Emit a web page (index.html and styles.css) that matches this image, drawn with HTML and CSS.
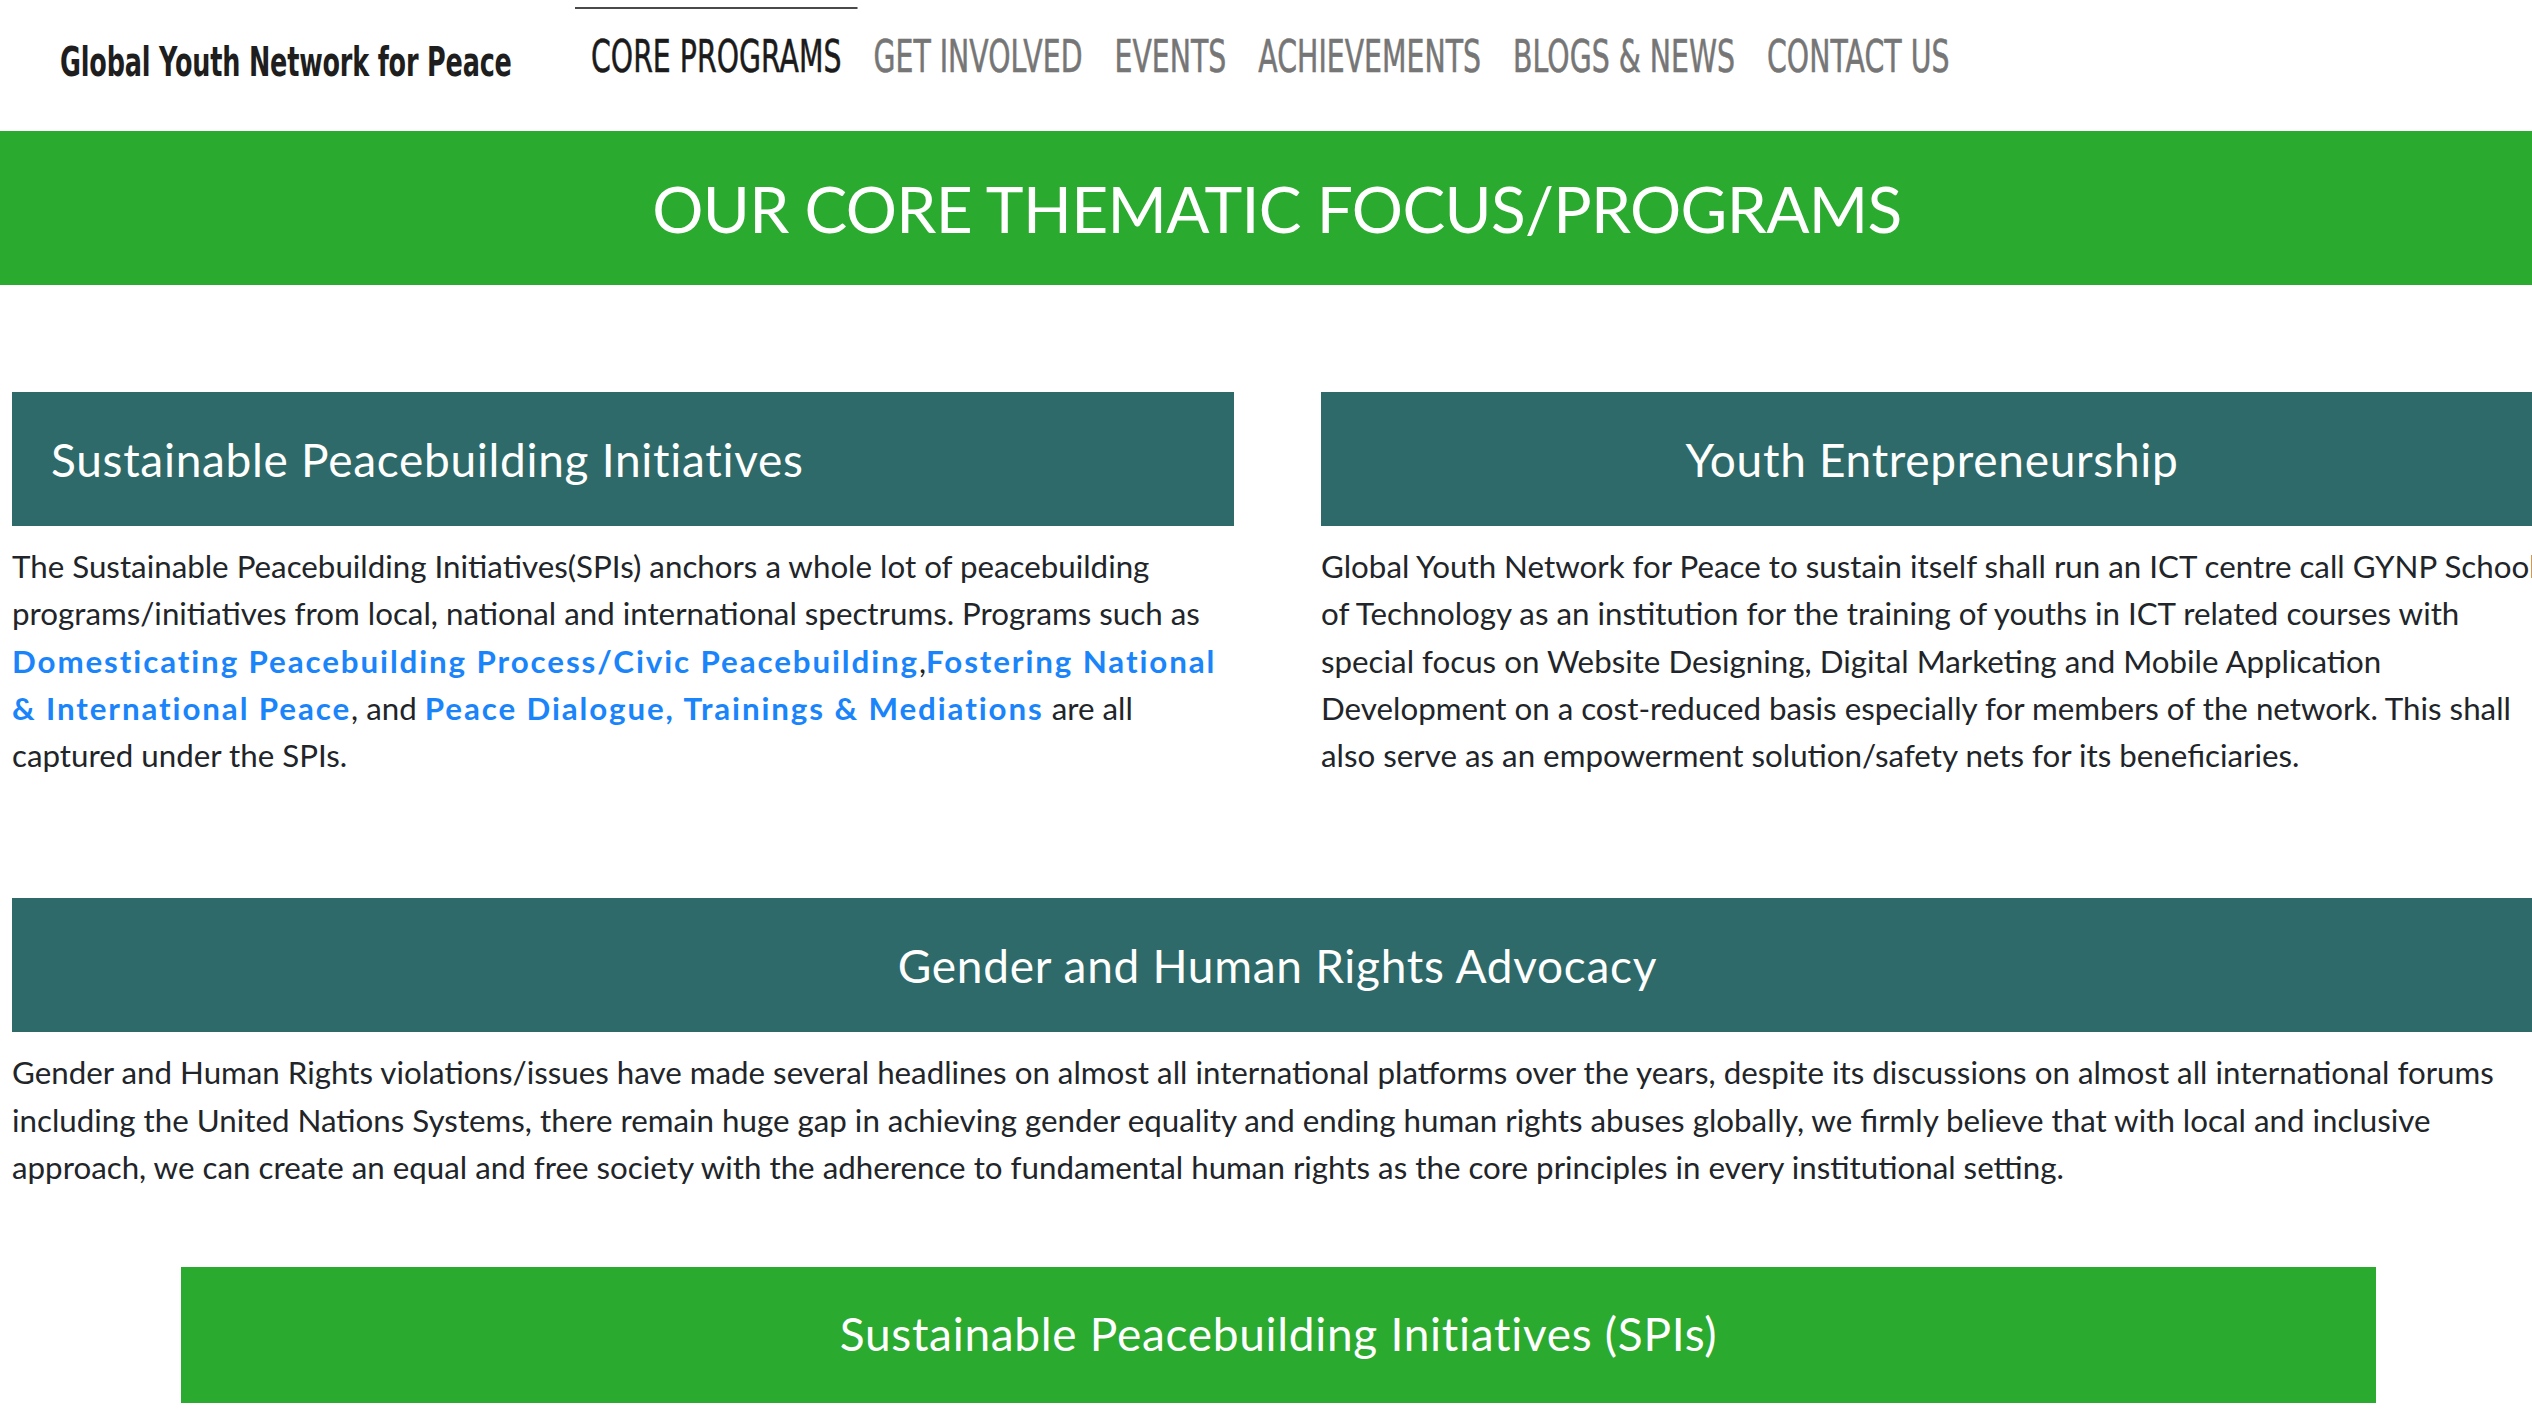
FILE: index.html
```html
<!DOCTYPE html>
<html lang="en">
<head>
<meta charset="utf-8">
<title>Core Programs - Global Youth Network for Peace</title>
<link rel="stylesheet" href="styles.css">
</head>
<body>
<header class="site-header">
  <div class="logo"><span class="logo-text">Global Youth Network for Peace</span></div>
  <nav class="main-nav">
    <a class="nav-item active" href="#">CORE PROGRAMS</a>
    <a class="nav-item" href="#">GET INVOLVED</a>
    <a class="nav-item" href="#">EVENTS</a>
    <a class="nav-item" href="#">ACHIEVEMENTS</a>
    <a class="nav-item" href="#">BLOGS &amp; NEWS</a>
    <a class="nav-item" href="#">CONTACT US</a>
  </nav>
</header>

<section class="banner">
  <h1 class="banner-title">OUR CORE THEMATIC FOCUS/PROGRAMS</h1>
</section>

<main class="page">
  <div class="two-col">
    <article class="program">
      <h2 class="program-title left">Sustainable Peacebuilding Initiatives</h2>
      <p class="program-text">The Sustainable Peacebuilding Initiatives(SPIs) anchors a whole lot of peacebuilding programs/initiatives from local, national and international spectrums. Programs such as <a class="link" href="#">Domesticating Peacebuilding Process/Civic Peacebuilding</a>,<a class="link" href="#">Fostering National &amp; International Peace</a>, and <a class="link" href="#">Peace Dialogue, Trainings &amp; Mediations</a> are all captured under the SPIs.</p>
    </article>
    <article class="program">
      <h2 class="program-title">Youth Entrepreneurship</h2>
      <p class="program-text">Global Youth Network for Peace to sustain itself shall run an ICT centre call GYNP School of Technology as an institution for the training of youths in ICT related courses with special focus on Website Designing, Digital Marketing and Mobile Application Development on a cost-reduced basis especially for members of the network. This shall also serve as an empowerment solution/safety nets for its beneficiaries.</p>
    </article>
  </div>

  <article class="program wide">
    <h2 class="program-title">Gender and Human Rights Advocacy</h2>
    <p class="program-text">Gender and Human Rights violations/issues have made several headlines on almost all international platforms over the years, despite its discussions on almost all international forums including the United Nations Systems, there remain huge gap in achieving gender equality and ending human rights abuses globally, we firmly believe that with local and inclusive approach, we can create an equal and free society with the adherence to fundamental human rights as the core principles in every institutional setting.</p>
  </article>

  <div class="green-box">
    <h2 class="green-box-title">Sustainable Peacebuilding Initiatives (SPIs)</h2>
  </div>
</main>
</body>
</html>
```

FILE: styles.css
```css
html, body {
  margin: 0;
  padding: 0;
  background: #ffffff;
  overflow: hidden;
}

body {
  font-family: Lato, "Open Sans", sans-serif;
  color: #212529;
  width: 2532px;
}

.site-header {
  display: flex;
  align-items: flex-start;
  height: 131px;
  padding-left: 60px;
}

.logo {
  width: 515px;
  flex: none;
  padding-top: 38px;
  white-space: nowrap;
}

.logo-text {
  display: inline-block;
  font-family: "DejaVu Sans", sans-serif;
  font-size: 41px;
  font-weight: 700;
  letter-spacing: -0.3px;
  color: #1e1e1e;
  transform: scaleX(0.622);
  transform-origin: 0 0;
}

.main-nav {
  display: flex;
  flex: none;
  transform: scaleX(0.645);
  transform-origin: 0 0;
}

.nav-item {
  font-family: "DejaVu Sans", sans-serif;
  font-size: 44px;
  line-height: 1.16;
  color: #767676;
  text-decoration: none;
  padding: 22px 24.8px 0;
  border-top: 2px solid transparent;
  margin-top: 7px;
  white-space: nowrap;
  -webkit-text-stroke: 0.6px currentColor;
}

.nav-item.active {
  color: #1b1b1b;
  border-top-color: #4a4a4a;
}

.banner {
  background: #2aaa2e;
  height: 154px;
  display: flex;
  align-items: center;
  justify-content: center;
  padding-left: 22px;
}

.banner-title {
  margin: 0;
  font-size: 64px;
  font-weight: 400;
  color: #ffffff;
  letter-spacing: -0.65px;
}

.page {
  margin-left: 12px;
  width: 2531px;
  padding-top: 107px;
}

.two-col {
  display: grid;
  grid-template-columns: 1222px 1222px;
  column-gap: 87px;
}

.program-title {
  margin: 0;
  background: #2e6a69;
  color: #ffffff;
  height: 134px;
  display: flex;
  align-items: center;
  justify-content: center;
  font-size: 46px;
  font-weight: 400;
  letter-spacing: 0.7px;
}

.program-title.left {
  justify-content: flex-start;
  padding-left: 39px;
}

.program-text {
  margin: 17px 0 0;
  font-size: 31.3px;
  line-height: 47.25px;
}

.link {
  color: #1a84fb;
  font-weight: 700;
  text-decoration: none;
  letter-spacing: 1.9px;
}

.wide {
  margin-top: 119px;
}

.green-box {
  margin: 76px 167px 0 169px;
  height: 136px;
  background: #2aaa2e;
  display: flex;
  align-items: center;
  justify-content: center;
}

.green-box-title {
  margin: 0 0 4px;
  font-size: 46px;
  font-weight: 400;
  letter-spacing: 0.7px;
  color: #ffffff;
}
```
